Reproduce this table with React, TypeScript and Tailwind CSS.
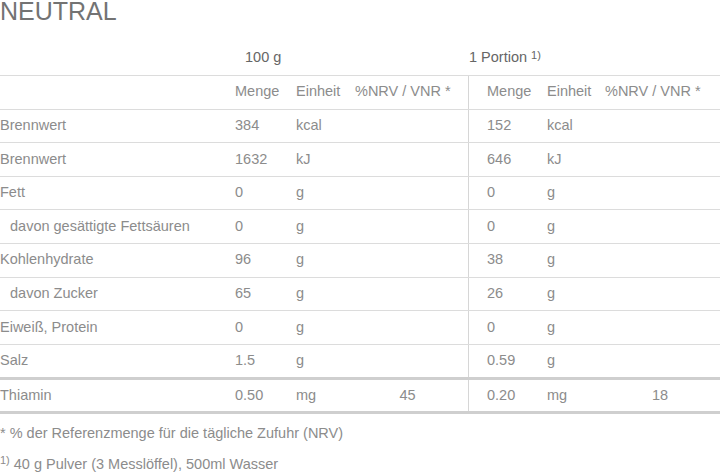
import React from "react";

type Row = {
  label: string;
  indent?: boolean;
  a: [string, string, string?];
  b: [string, string, string?];
};

const rows: Row[] = [
  { label: "Brennwert", a: ["384", "kcal"], b: ["152", "kcal"] },
  { label: "Brennwert", a: ["1632", "kJ"], b: ["646", "kJ"] },
  { label: "Fett", a: ["0", "g"], b: ["0", "g"] },
  { label: "davon gesättigte Fettsäuren", indent: true, a: ["0", "g"], b: ["0", "g"] },
  { label: "Kohlenhydrate", a: ["96", "g"], b: ["38", "g"] },
  { label: "davon Zucker", indent: true, a: ["65", "g"], b: ["26", "g"] },
  { label: "Eiweiß, Protein", a: ["0", "g"], b: ["0", "g"] },
  { label: "Salz", a: ["1.5", "g"], b: ["0.59", "g"] },
];

const vitamins: Row[] = [{ label: "Thiamin", a: ["0.50", "mg", "45"], b: ["0.20", "mg", "18"] }];

const cols = "grid grid-cols-[235px_61px_59px_113px_79px_58px_115px]";

function Cells({ row }: { row: Row }) {
  return (
    <>
      <div className={row.indent ? "pl-[10px]" : ""}>{row.label}</div>
      <div>{row.a[0]}</div>
      <div>{row.a[1]}</div>
      <div className="w-[105px] text-center">{row.a[2] ?? ""}</div>
      <div className="self-stretch flex items-center border-l border-[#d6d6d6] pl-[18px]">{row.b[0]}</div>
      <div>{row.b[1]}</div>
      <div className="w-[110px] text-center">{row.b[2] ?? ""}</div>
    </>
  );
}

export default function App() {
  return (
    <div className="w-[720px] h-[473px] overflow-hidden bg-white font-['Liberation_Sans',Arial,sans-serif] text-[14.5px] text-[#8c8c8c]">
      {/* Title */}
      <div className="-mt-[1px] h-[42px] text-[25px] leading-[25px] text-[#737373]">NEUTRAL</div>

      {/* Group headers */}
      <div className={`${cols} h-[34px] items-center text-[#666]`}>
        <div />
        <div className="col-span-3 pl-[10px]">100 g</div>
        <div className="col-span-3 pl-[1px]">
          1 Portion <sup className="relative -top-[3px] text-[11px]">1)</sup>
        </div>
      </div>

      {/* Column headers */}
      <div className={`${cols} h-[33.6px] items-center border-t border-[#dcdcdc]`}>
        <div />
        <div>Menge</div>
        <div>Einheit</div>
        <div>%NRV / VNR *</div>
        <div className="self-stretch flex items-center border-l border-[#d6d6d6] pl-[18px]">Menge</div>
        <div>Einheit</div>
        <div>%NRV / VNR *</div>
      </div>

      {rows.map((row, i) => (
        <div key={i} className={`${cols} h-[33.6px] items-center border-t border-[#dcdcdc]`}>
          <Cells row={row} />
        </div>
      ))}

      {vitamins.map((row, i) => (
        <div key={i} className={`${cols} h-[37px] items-center border-y-[3px] border-[#cfcfcf]`}>
          <Cells row={row} />
        </div>
      ))}

      {/* Footnotes */}
      <div className="mt-[9px] leading-[20px]">* % der Referenzmenge für die tägliche Zufuhr (NRV)</div>
      <div className="mt-[11px] leading-[20px]">
        <sup className="text-[11px]">1)</sup> 40 g Pulver (3 Messlöffel), 500ml Wasser
      </div>
    </div>
  );
}
